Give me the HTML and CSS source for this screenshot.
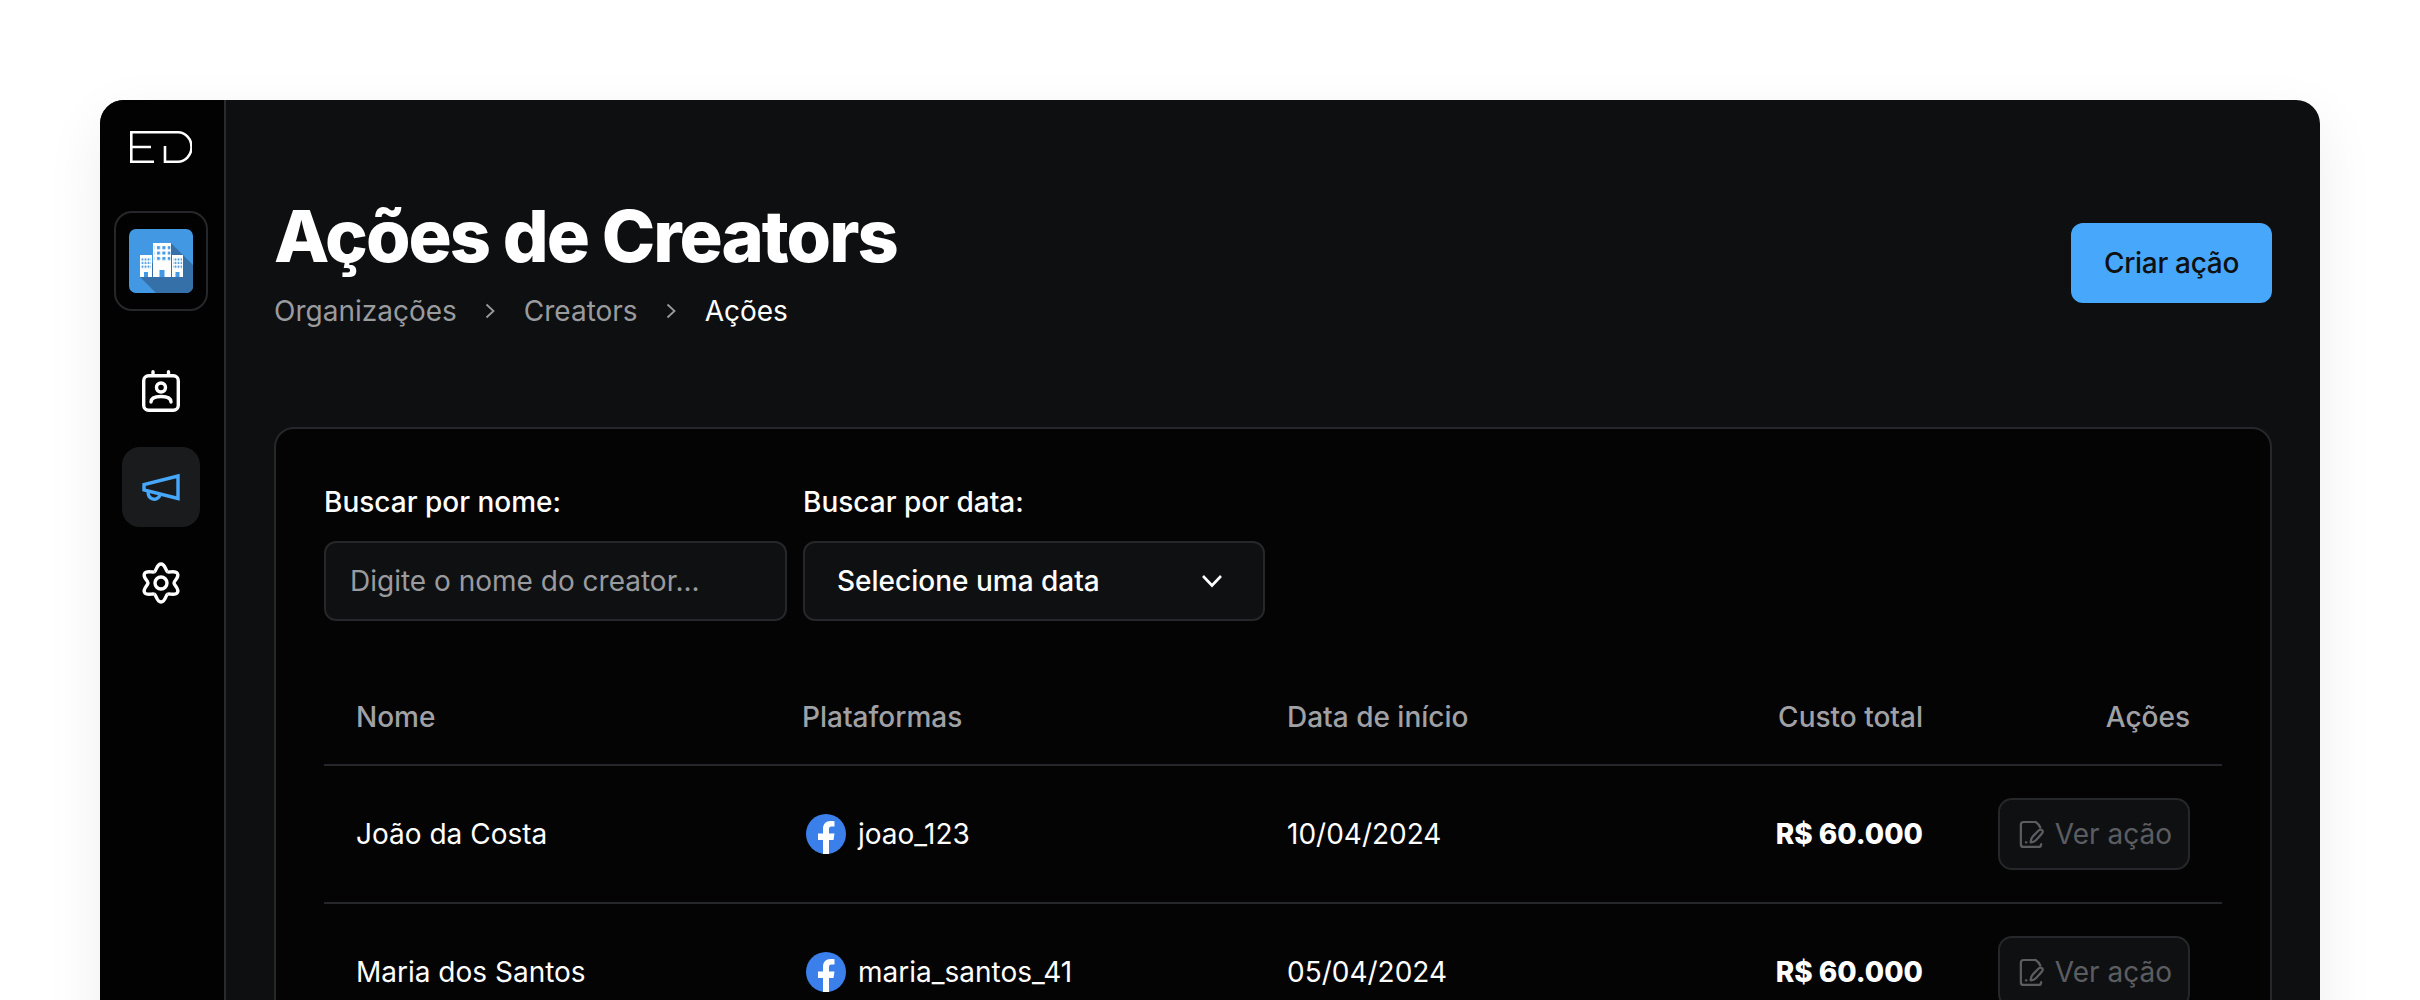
FILE: index.html
```html
<!DOCTYPE html>
<html lang="pt-BR">
<head>
<meta charset="utf-8">
<title>Ações de Creators</title>
<link rel="stylesheet" href="styles.css">
</head>
<body>
<div class="window">
  <aside class="sidebar">
    <svg class="logo" width="62" height="32" viewBox="0 0 62 32" fill="none" stroke="#fff" stroke-width="2.6">
      <path d="M24 1.3H1.3v29.4H24M1.3 16H21"/>
      <path d="M24 1.3h24a13.5 14.7 0 0 1 0 29.4H35V15"/>
    </svg>
    <div class="org">
      <svg class="org-tile" width="64" height="64" viewBox="0 0 64 64">
        <defs>
          <pattern id="w1" width="3" height="3.6" patternUnits="userSpaceOnUse"><rect x=".6" y=".6" width="1.8" height="2" fill="#4298e3"/></pattern>
          <pattern id="w2" width="5.4" height="5.4" patternUnits="userSpaceOnUse"><rect x="1" y="1" width="3" height="3" fill="#4298e3"/></pattern>
        </defs>
        <rect width="64" height="64" rx="7" fill="#4298e3"/>
        <path d="M42 14 64 36V57a7 7 0 0 1-7 7H27L11 48Z" fill="#3571a8"/>
        <path d="M11 26h12v22H11zM24 14h18v34H24zM43 26h11v22H43z" fill="#fff"/>
        <rect x="12" y="28" width="10" height="12" fill="url(#w1)"/>
        <rect x="44" y="28" width="9" height="12" fill="url(#w1)"/>
        <rect x="25.5" y="17" width="16" height="16" fill="url(#w2)"/>
        <path d="M15 43h4v5h-4zM30.5 41h5v7h-5zM46.500 43h4v5h-4z" fill="#4298e3"/>
      </svg>
    </div>
    <nav class="nav">
      <a class="nav-item">
        <svg width="38" height="42" viewBox="0 0 38 42" fill="none" stroke="#fff" stroke-width="3.4" stroke-linecap="round">
          <rect x="1.700" y="5.700" width="34.600" height="34.600" rx="5"/>
          <path d="M11 1.700V5M26.500 1.700V5"/>
          <circle cx="19" cy="17.500" r="4.500"/>
          <path d="M9 32c0-3.800 4.500-5.500 10-5.500S29 28.200 29 32"/>
        </svg>
      </a>
      <a class="nav-item active">
        <svg width="38" height="28" viewBox="0 0 38 28" fill="none" stroke="#47a8fb" stroke-width="3.4">
          <path d="M36 3v22.500L2 17v-5.500Z"/>
          <path d="M6.500 18.500a6 6 0 0 0 11.500 3.500"/>
        </svg>
      </a>
      <a class="nav-item">
        <svg width="42" height="42" viewBox="0 0 42 42" fill="none" stroke="#fff" stroke-width="3.4" stroke-linejoin="round">
          <g id="gear">
            <path id="lobe" d="M14.500 9.740C16.400 8.600 16.800 2 21 2s4.600 6.600 6.500 7.740"/>
            <use href="#lobe" transform="rotate(60 21 21)"/>
            <use href="#lobe" transform="rotate(120 21 21)"/>
            <use href="#lobe" transform="rotate(180 21 21)"/>
            <use href="#lobe" transform="rotate(240 21 21)"/>
            <use href="#lobe" transform="rotate(300 21 21)"/>
          </g>
          <circle cx="21" cy="21" r="6"/>
        </svg>
      </a>
    </nav>
  </aside>
  <main class="main">
    <header class="page-head">
      <div>
        <h1 class="title">Ações de Creators</h1>
        <div class="crumbs">
          <span>Organizações</span>
          <svg class="crumb-sep" width="10" height="16" viewBox="0 0 10 16" fill="none" stroke="#9a9b9f" stroke-width="1.800"><path d="m1.500 1.500 7 6.500-7 6.500"/></svg>
          <span>Creators</span>
          <svg class="crumb-sep" width="10" height="16" viewBox="0 0 10 16" fill="none" stroke="#9a9b9f" stroke-width="1.800"><path d="m1.500 1.500 7 6.500-7 6.500"/></svg>
          <span class="current">Ações</span>
        </div>
      </div>
      <button class="primary">Criar ação</button>
    </header>
    <section class="card">
      <div class="filters">
        <label class="field">
          <span class="field-label">Buscar por nome:</span>
          <input class="input" type="text" placeholder="Digite o nome do creator...">
        </label>
        <div class="field">
          <span class="field-label">Buscar por data:</span>
          <div class="select">
            <span>Selecione uma data</span>
            <svg width="22" height="14" viewBox="0 0 22 14" fill="none" stroke="#fff" stroke-width="2.600"><path d="m2 2 9 9.500L20 2"/></svg>
          </div>
        </div>
      </div>
      <table class="table">
        <colgroup><col class="c1"><col class="c2"><col class="c3"><col class="c4"><col class="c5"></colgroup>
        <thead>
          <tr><th>Nome</th><th>Plataformas</th><th>Data de início</th><th class="right">Custo total</th><th class="right">Ações</th></tr>
        </thead>
        <tbody>
          <tr>
            <td>João da Costa</td>
            <td><div class="platform">
              <svg class="fb" width="40" height="40" viewBox="0 0 40 40"><circle cx="20" cy="20" r="20" fill="#3b80ea"/><path d="M17 40V26h-5v-6.500h5V15c0-5.200 3-8 7.500-8 2 0 3.500.2 4 .3v5.200h-3C23.300 12.500 23 13.700 23 15.300v4.200h5.500l-1 6.500H23v14z" fill="#fff"/></svg>
              <span>joao_123</span></div></td>
            <td>10/04/2024</td>
            <td class="right cost">R$ 60.000</td>
            <td class="right"><button class="ghost">
              <svg width="28" height="30" viewBox="0 0 28 30" fill="none" stroke="#5c5d61" stroke-width="2.400" stroke-linecap="round" stroke-linejoin="round"><path d="M18 2H5a3 3 0 0 0-3 3v21a3 3 0 0 0 3 3h16a3 3 0 0 0 3-3M18 2c2.500 1.500 4 3.500 5 6M7.500 24h.5"/><path d="M12.500 24c0-3 1-5 3-7l6-6c2-1.500 5-.5 4 2.500-1 2-5 6-7 8-1.500 1.500-3.500 2.500-6 2.500z"/></svg>
              Ver ação</button></td>
          </tr>
          <tr>
            <td>Maria dos Santos</td>
            <td><div class="platform">
              <svg class="fb" width="40" height="40" viewBox="0 0 40 40"><circle cx="20" cy="20" r="20" fill="#3b80ea"/><path d="M17 40V26h-5v-6.500h5V15c0-5.200 3-8 7.500-8 2 0 3.500.2 4 .3v5.200h-3C23.300 12.500 23 13.700 23 15.300v4.200h5.500l-1 6.500H23v14z" fill="#fff"/></svg>
              <span>maria_santos_41</span></div></td>
            <td>05/04/2024</td>
            <td class="right cost">R$ 60.000</td>
            <td class="right"><button class="ghost">
              <svg width="28" height="30" viewBox="0 0 28 30" fill="none" stroke="#5c5d61" stroke-width="2.400" stroke-linecap="round" stroke-linejoin="round"><path d="M18 2H5a3 3 0 0 0-3 3v21a3 3 0 0 0 3 3h16a3 3 0 0 0 3-3M18 2c2.500 1.500 4 3.500 5 6M7.500 24h.5"/><path d="M12.500 24c0-3 1-5 3-7l6-6c2-1.500 5-.5 4 2.500-1 2-5 6-7 8-1.500 1.500-3.500 2.500-6 2.500z"/></svg>
              Ver ação</button></td>
          </tr>
        </tbody>
      </table>
    </section>
  </main>
</div>
</body>
</html>
```
FILE: styles.css
```css
* { box-sizing: border-box; }
html, body { margin: 0; height: 1000px; overflow: hidden; background: #fff; }
body { padding: 100px; font-family: Inter, "Liberation Sans", sans-serif; color: #fff; font-size: 28px; }

.window {
  display: flex;
  min-height: 1300px;
  border-radius: 24px;
  overflow: hidden;
  background: #0e0f11;
  box-shadow: 0 20px 60px rgba(0, 0, 0, .07);
}

.sidebar {
  width: 126px;
  flex: none;
  background: #020203;
  border-right: 2px solid #2a2b2d;
  display: flex;
  flex-direction: column;
  align-items: center;
  padding: 31px 2px 0 0;
}
.logo { display: block; }
.org {
  width: 94px;
  height: 100px;
  margin-top: 48px;
  border: 2px solid #26272a;
  border-radius: 18px;
  display: flex;
  align-items: center;
  justify-content: center;
}
.org-tile { display: block; }
.nav { margin-top: 40px; display: flex; flex-direction: column; gap: 16px; align-items: center; }
.nav-item { width: 78px; height: 80px; border-radius: 18px; display: flex; align-items: center; justify-content: center; }
.nav-item.active { background: #1a1b1d; }

.main { flex: 1; min-width: 0; padding: 0 48px; }
.page-head { display: flex; justify-content: space-between; align-items: center; height: 327px; padding-bottom: 2px; }
.title { margin: -3px 0 0; font-size: 72px; line-height: 88px; font-weight: 800; letter-spacing: -2px; color: #fff; }
.crumbs { display: flex; align-items: center; gap: 26.5px; color: #9a9b9f; font-size: 28px; line-height: 40px; margin-top: 11px; }
.crumbs .current { color: #fff; }
.crumb-sep { display: block; margin: 0 2px; }
.primary {
  width: 201px;
  height: 80px;
  border: 0;
  border-radius: 12px;
  background: #47a8fb;
  color: #0f1012;
  font: 500 28px Inter, "Liberation Sans", sans-serif;
  letter-spacing: -.3px;
}

.card {
  background: #040405;
  border: 2px solid #26272a;
  border-radius: 20px;
  padding: 55px 48px 0;
  min-height: 900px;
}
.filters { display: flex; gap: 16px; }
.field { display: flex; flex-direction: column; width: 462px; gap: 21px; }
.field:first-child { width: 463px; }
.field-label { font-size: 28px; line-height: 36px; font-weight: 500; }
.input, .select {
  height: 80px;
  background: #0f1012;
  border: 2px solid #26272a;
  border-radius: 12px;
  font: 500 28px Inter, "Liberation Sans", sans-serif;
  color: #fff;
}
.input { padding: 0 24px; width: 100%; outline: 0; font-weight: 400; }
.input::placeholder { color: #9a9b9f; opacity: 1; }
.select { display: flex; align-items: center; justify-content: space-between; padding: 0 40px 0 32px; }

.table { width: 100%; border-collapse: collapse; table-layout: fixed; margin-top: 46px; }
.c1 { width: 446px; }
.c2 { width: 485px; }
.c3 { width: 350px; }
.c4 { width: 350px; }
.c5 { width: 267px; }
.table th { height: 98px; padding: 2px 32px 0; text-align: left; font-size: 28px; font-weight: 500; color: #a0a1a5; }
.table td { height: 138px; padding: 0 32px; font-size: 28px; font-weight: 400; color: #fff; }
.table tr { border-bottom: 2px solid #26272a; }
.table .right { text-align: right; }
.table .cost { font-weight: 800; }
.platform { display: flex; align-items: center; gap: 12px; }
.fb { display: block; margin-left: 4px; }
.ghost {
  display: inline-flex;
  align-items: center;
  gap: 10px;
  width: 192px;
  height: 72px;
  margin-bottom: 1px;
  padding: 0 16px 0 19px;
  background: #0f1012;
  border: 2px solid #26272a;
  border-radius: 14px;
  color: #5c5d61;
  font: 400 28px Inter, "Liberation Sans", sans-serif;
  white-space: nowrap;
  vertical-align: middle;
}
```
